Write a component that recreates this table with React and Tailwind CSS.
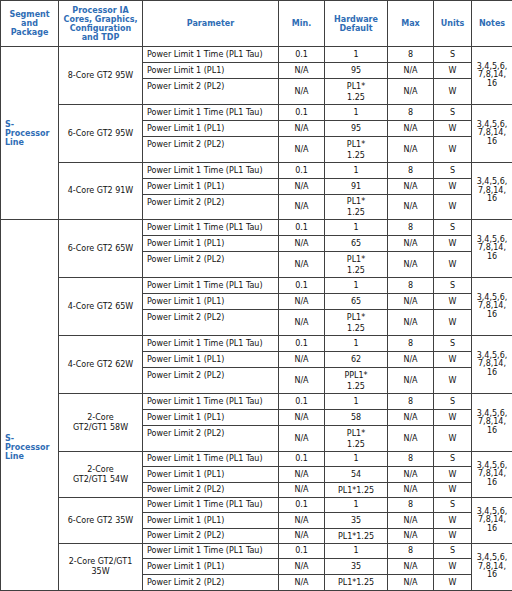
import React from "react";

const groups1 = [
  { name: ["8-Core GT2 95W"], def: ["95"], pl2: ["PL1*", "1.25"] },
  { name: ["6-Core GT2 95W"], def: ["95"], pl2: ["PL1*", "1.25"] },
  { name: ["4-Core GT2 91W"], def: ["91"], pl2: ["PL1*", "1.25"], short: true },
];
const groups2 = [
  { name: ["6-Core GT2 65W"], def: ["65"], pl2: ["PL1*", "1.25"] },
  { name: ["4-Core GT2 65W"], def: ["65"], pl2: ["PL1*", "1.25"] },
  { name: ["4-Core GT2 62W"], def: ["62"], pl2: ["PPL1*", "1.25"] },
  { name: ["2-Core", "GT2/GT1 58W"], def: ["58"], pl2: ["PL1*", "1.25"] },
  { name: ["2-Core", "GT2/GT1 54W"], def: ["54"], pl2: ["PL1*1.25"] },
  { name: ["6-Core GT2 35W"], def: ["35"], pl2: ["PL1*1.25"] },
  { name: ["2-Core GT2/GT1", "35W"], def: ["35"], pl2: ["PL1*1.25"], tall: true },
];

const cell = "border border-[#404040] p-0";
const hd = `${cell} text-center align-middle font-bold text-[#2f6db5] leading-[9px]`;

function Lines({ lines, lh = "leading-[9px]" }) {
  return (
    <div className={lh}>
      {lines.map((l, i) => (
        <div key={i}>{l}</div>
      ))}
    </div>
  );
}

function Group({ g, seg }) {
  const two = g.pl2.length > 1;
  const h = two
    ? ["h-[16px]", "h-[16px]", g.short ? "h-[25px]" : "h-[26px]"]
    : ["h-[15px]", "h-[16px]", g.tall ? "h-[16px]" : "h-[15px]"];
  return (
    <>
      <tr className={h[0]}>
        {seg}
        <td rowSpan={3} className={`${cell} text-center align-middle`}>
          <Lines lines={g.name} lh="leading-[10px]" />
        </td>
        <td className={`${cell} pl-[4px] align-middle whitespace-nowrap overflow-hidden`}>Power Limit 1 Time (PL1 Tau)</td>
        <td className={`${cell} text-center`}>0.1</td>
        <td className={`${cell} text-center`}>1</td>
        <td className={`${cell} text-center`}>8</td>
        <td className={`${cell} text-center`}>S</td>
        <td rowSpan={3} className={`${cell} text-center align-middle`}>
          <Lines lines={["3,4,5,6,", "7,8,14,", "16"]} lh="leading-[8.5px]" />
        </td>
      </tr>
      <tr className={h[1]}>
        <td className={`${cell} pl-[4px]`}>Power Limit 1 (PL1)</td>
        <td className={`${cell} text-center`}>N/A</td>
        <td className={`${cell} text-center`}>{g.def}</td>
        <td className={`${cell} text-center`}>N/A</td>
        <td className={`${cell} text-center`}>W</td>
      </tr>
      <tr className={h[2]}>
        <td className={`${cell} pl-[4px] ${two ? "align-top pt-[2px]" : ""}`}>Power Limit 2 (PL2)</td>
        <td className={`${cell} text-center`}>N/A</td>
        <td className={`${cell} text-center`}>
          <Lines lines={g.pl2} lh="leading-[11px]" />
        </td>
        <td className={`${cell} text-center`}>N/A</td>
        <td className={`${cell} text-center`}>W</td>
      </tr>
    </>
  );
}

export default function App() {
  const segText = (
    <div className="font-bold text-[#2f6db5] leading-[9px] pl-[4px] pr-[1px]">
      <div>S-</div>
      <div>Processor</div>
      <div>Line</div>
    </div>
  );
  return (
    <div
      className="w-[512px] h-[591px] bg-white overflow-hidden text-[#111111] text-[8px]"
      style={{ fontFamily: '"DejaVu Sans", Verdana, sans-serif' }}
    >
      <table className="border-collapse table-fixed w-[512px]">
        <colgroup>
          <col className="w-[58px]" />
          <col className="w-[84px]" />
          <col className="w-[136px]" />
          <col className="w-[46px]" />
          <col className="w-[63px]" />
          <col className="w-[46px]" />
          <col className="w-[38px]" />
          <col className="w-[41px]" />
        </colgroup>
        <thead>
          <tr className="h-[46px]">
            <td className={hd}>
              Segment
              <br />
              and
              <br />
              Package
            </td>
            <td className={hd}>
              Processor IA
              <br />
              Cores, Graphics,
              <br />
              Configuration
              <br />
              and TDP
            </td>
            <td className={hd}>Parameter</td>
            <td className={hd}>Min.</td>
            <td className={hd}>
              Hardware
              <br />
              Default
            </td>
            <td className={hd}>Max</td>
            <td className={hd}>Units</td>
            <td className={hd}>Notes</td>
          </tr>
        </thead>
        <tbody>
          {groups1.map((g, i) => (
            <Group
              key={"a" + i}
              g={g}
              seg={
                i === 0 ? (
                  <td rowSpan={9} className={`${cell} align-middle`}>
                    {segText}
                  </td>
                ) : null
              }
            />
          ))}
          {groups2.map((g, i) => (
            <Group
              key={"b" + i}
              g={g}
              seg={
                i === 0 ? (
                  <td rowSpan={21} className={`${cell} align-top pt-[214px]`}>
                    {segText}
                  </td>
                ) : null
              }
            />
          ))}
        </tbody>
      </table>
    </div>
  );
}
